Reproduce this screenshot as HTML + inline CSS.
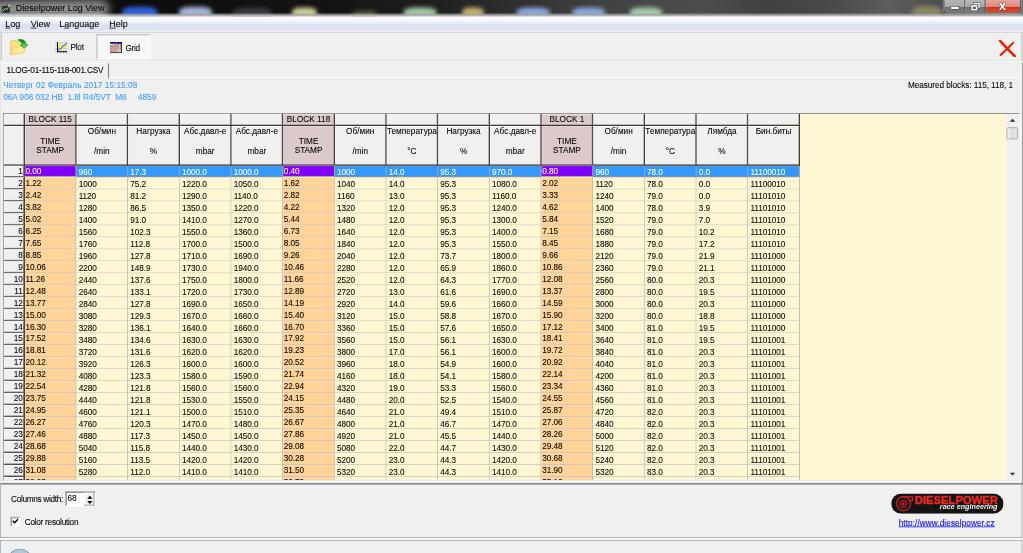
<!DOCTYPE html>
<html><head><meta charset="utf-8"><title>Dieselpower Log View</title>
<style>
html,body{margin:0;padding:0;background:#f0f0f0;overflow:hidden}
body{width:1023px;height:553px;position:relative}
#w{position:absolute;left:0;top:0;width:1366px;height:739px;transform:scale(0.74890);transform-origin:0 0;background:#f0f0f0;font-family:"Liberation Sans",sans-serif;font-size:11px;color:#000;overflow:hidden;-webkit-text-stroke:0.1px}
#w div,#w span{position:absolute;box-sizing:border-box;white-space:nowrap}
/* title */
#tb{left:0;top:0;width:1366px;height:22px;background:linear-gradient(90deg,#0a0a0a 0.0%,#0c0c0c 9.8%,#141414 33.2%,#202020 43.0%,#303030 50.8%,#404242 58.7%,#4c4e4e 68.4%,#404242 75.0%,#484a4a 81.1%,#5c5e5e 87.0%,#4c4e4e 91.9%,#6c6e6e 100.0%);overflow:hidden}
#tb .blob{border-radius:35%;filter:blur(3px)}
#tbe{left:0;top:16.5px;width:1366px;height:5.5px;background:linear-gradient(rgba(150,152,152,0),rgba(155,157,157,.7) 40%,rgba(175,177,177,.95) 72%,rgba(232,235,240,1) 100%)}
#tt{left:21px;top:4.2px;font-size:12px;color:#000}
#tglow{left:-12px;top:0px;width:158px;height:24px;border-radius:12px;background:rgba(255,255,255,.55);filter:blur(6px)}
#wb{left:1260px;top:0;width:103px;height:18px;border:1px solid #3a3a3a;border-top:none;border-radius:0 0 5px 5px;overflow:hidden;box-shadow:0 0 0 1px rgba(255,255,255,.35)}
.wbt{top:0;height:18px;background:linear-gradient(#b4b6b8 0%,#a6a8aa 48%,#6c6f74 52%,#7c7f84 100%);border-right:1px solid #444;box-shadow:inset 1px 0 0 rgba(255,255,255,.4)}
.wbt.cl{background:linear-gradient(#e8a59c 0%,#dd8a80 48%,#c9321e 52%,#d25a3c 100%);border-right:none}
#w i{position:absolute;display:block;box-sizing:border-box}
#mb{left:0;top:22px;width:1366px;height:20px;background:linear-gradient(#ffffff 0%,#f4f6fb 30%,#e6eaf5 48%,#d8dff0 56%,#dde3f2 85%,#e6eaf5 100%);font-size:12px}
#mb span{top:3px}
#mb u{text-decoration:underline}
#tool{left:1px;top:43px;width:1364px;height:38.6px;border:1px solid #a6a6a6;border-top-color:#cfcfcf;background:#f0f0f0}
/* grid */
#gridbox{left:4px;top:151px;width:1357px;height:491px;border:1px solid #585858;border-right-color:#e3e3e3;border-bottom-color:#e3e3e3;background:#f0f0f0;box-shadow:1.5px 1.5px 0 #fff}
#grid{left:0;top:0;width:1338px;height:489px;overflow:hidden;background:#fff7d3}
.gbg{left:0;top:0;width:1063px;height:489px}
.fx{background:#f0f0f0;border-left:1px solid #fff;border-top:1px solid #fff;border-right:1px solid #a0a0a0;border-bottom:1px solid #a0a0a0;text-align:center;line-height:13px}
.fx.tsb{background:#dccaca;border-color:#efe6e6 #a89898 #a89898 #efe6e6}
.fx.b0{padding-top:0px;line-height:12.2px}
.tsh{left:0;width:100%;top:12.9px;text-align:center;line-height:12.6px}
.h1{left:-4px;right:-4px;top:0px;text-align:center}
.h2{left:0;width:100%;top:26px;text-align:center}
.bl{background:#000;z-index:2}
.row{left:0;width:1063px;height:16px}
.rn{left:0;top:0;width:27px;height:15px;background:#f0f0f0;border-left:1px solid #fff;border-top:1px solid #fff;text-align:right;padding-right:0.5px;line-height:12.4px;box-shadow:0 1.3px 0 #000;border-right:1px solid #606060;border-bottom:1px solid #585858}
.c{top:0;width:69px;height:16px;border-right:1px solid #acacb4;border-bottom:1px solid #c0c0c4;background:#fff7d3;padding-left:3px;line-height:19.9px;overflow:hidden;letter-spacing:-0.1px}
.c.ts{background:#ffd39a;padding-left:1px;line-height:14.6px}
.sel .c{background:#3399ff;color:#fff}
.sel .c.ts{background:#8000ff;outline:1px dotted #8fd040;outline-offset:-1px;height:15px;z-index:4}
.foc{left:28px;top:0;width:1034px;height:15px;border-top:1px dotted #d07820;border-bottom:1px dotted #d07820;z-index:3}

#tool span{color:#000}
#gbtn{left:127px;top:2px;width:72px;height:33px;background:#f8f8f8;border:1px solid #a0a0a0;border-right-color:#fff;border-bottom-color:#fff}
#toolw{left:0;top:81px;width:1366px;height:2px;background:#fbfbfb}
#panel{left:0;top:83px;width:1366px;height:564px;border:1px solid #858585;border-top-color:#e8e8e8;border-left-color:#e0e0e0;border-bottom:2px solid #808080;}
#tab{left:1px;top:84px;width:145px;height:21px;border-left:1px solid #fff;border-top:1px solid #fff;border-right:2.4px solid #808080;border-radius:2px 2px 0 0}
#tab span{left:6.8px;top:1.8px;letter-spacing:-0.27px}
#tabline{left:146px;top:103px;width:1218px;height:1px;background:#fff}
.info{color:#3399ff;letter-spacing:0.05px;-webkit-text-stroke:0.05px}
#meas{left:1212.4px;top:108px;letter-spacing:-0.085px}
#vs{left:1338px;top:0;width:17px;height:489px;background:#f0f0f0}
#thumb{left:1px;top:18px;width:15px;height:16px;border:1px solid #979797;border-radius:2px;background:linear-gradient(90deg,#f4f4f4,#dcdcdc 50%,#e8e8e8)}
#bp{left:0;top:647px;width:1365px;height:71px;border:1px solid #a0a0a0;border-top:none}
#spin{left:86px;top:9px;width:41px;height:20px;background:#fff;border:1px solid #a0a0a0;border-right-color:#fff;border-bottom-color:#fff;box-shadow:inset 1px 1px 0 #696969}
#spb{left:24px;top:1px;width:14px;height:17px;background:#f0f0f0;border:1px solid #fff;border-right-color:#808080;border-bottom-color:#808080}
#cb{left:13px;top:43px;width:13px;height:13px;background:#fff;border:1px solid #a0a0a0;border-right-color:#fff;border-bottom-color:#fff;box-shadow:inset 1px 1px 0 #696969}
#logo{left:1188.5px;top:12.2px;width:150px;height:27px}
#lnk{left:1199px;top:45.3px;letter-spacing:0.09px;color:#0000ff;text-decoration:underline}
#sb{left:0;top:721px;width:1365px;height:18px;border:1px solid #a0a0a0;border-bottom:none}
#orb{left:8.2px;top:10.7px;width:34.4px;height:34.4px;border-radius:50%;background:linear-gradient(#b4cbdb,#8fb2cc);border:1px solid #5a88ac}
</style></head><body>
<div id="w">
<div id="tb">
 <div class="blob" style="left:163px;top:9px;width:47px;height:17px;background:#2f60e0"></div>
 <div class="blob" style="left:239px;top:9px;width:44px;height:17px;background:#a4b4d8"></div>
 <div class="blob" style="left:310px;top:10px;width:53px;height:16px;background:#36383c"></div>
 <div class="blob" style="left:390px;top:10px;width:33px;height:16px;background:#d4cc94"></div>
 <div class="blob" style="left:470px;top:14px;width:33px;height:12px;background:#5a5540"></div>
 <div class="blob" style="left:539px;top:10px;width:44px;height:16px;background:#a4c8a4"></div>
 <div class="blob" style="left:617px;top:10px;width:29px;height:16px;background:#c0b068"></div>
 <div class="blob" style="left:690px;top:10px;width:44px;height:16px;background:#8aa6dc"></div>
 <div class="blob" style="left:764px;top:10px;width:44px;height:16px;background:#8aa6dc"></div>
 <div class="blob" style="left:841px;top:10px;width:43px;height:16px;background:#a8cca8"></div>
 <div class="blob" style="left:1218px;top:8px;width:40px;height:18px;background:#8a8462"></div>
 <div id="tbe"></div>
 <div id="tglow"></div>
 <svg style="position:absolute;left:2px;top:5px" width="13" height="13" viewBox="0 0 13 13"><rect x="0.5" y="2.5" width="11" height="10" fill="#16302c" stroke="#7c8c8a" stroke-width="1"/><path d="M2 10 L5 6 L7 8 L10 4" stroke="#e8e860" stroke-width="1.200" fill="none"/><rect x="8" y="0" width="5" height="5" fill="#9aa4a4" stroke="#333" stroke-width="0.800"/></svg>
 <div id="tt">Dieselpower Log View</div>
 <div id="wb">
  <div class="wbt" style="left:0;width:28px"><i style="left:9px;top:9px;width:10px;height:3px;background:#fff;box-shadow:0 0 0 1px #555"></i></div>
  <div class="wbt" style="left:28px;width:27px"><i style="left:11px;top:4px;width:8px;height:7px;border:1.500px solid #fff;box-shadow:0 0 0 0.800px #444"></i><i style="left:8px;top:7px;width:8px;height:7px;border:2px solid #fff;background:#555;box-shadow:0 0 0 0.800px #444"></i></div>
  <div class="wbt cl" style="left:55px;width:47px"><span style="left:18px;top:-2.2px;font-size:16.500px;font-weight:bold;color:#fff;text-shadow:0 0 1px #333,0 0 1px #333,0 0 2px #333">x</span></div>
 </div>
</div>
<div id="mb"><span style="left:7px"><u>L</u>og</span><span style="left:41px"><u>V</u>iew</span><span style="left:79px">L<u>a</u>nguage</span><span style="left:146px"><u>H</u>elp</span></div>
<div id="tool">
 <svg id="ic-open" style="position:absolute;left:10.8px;top:7.8px" width="26" height="24" viewBox="0 0 26 24">
  <defs><radialGradient id="ga" cx="19" cy="9.5" r="6" gradientUnits="userSpaceOnUse"><stop offset="0" stop-color="#7ce45c"/><stop offset="0.55" stop-color="#3cb43a"/><stop offset="1" stop-color="#188818"/></radialGradient>
  <linearGradient id="gf" x1="0" y1="0" x2="0" y2="1"><stop offset="0" stop-color="#fff6b0"/><stop offset="1" stop-color="#fbe07c"/></linearGradient></defs>
  <path d="M0.8 20.6 L0.8 4 Q0.8 2.2 2.6 2 L8.7 2 L10 4.500 L16.200 4.500 L16.200 12 L3 20.600 Z" fill="#f9e084" stroke="#e6b850" stroke-width="0.900"/>
  <path d="M1.600 20.800 L4.800 11.900 L10 11.600 L11.400 9.700 L21.400 9.700 L18.900 18.800 Z" fill="url(#gf)" stroke="#ecc35c" stroke-width="0.800"/>
  <path d="M11.700 0.500 C16 -0.500 21.500 1.500 22 7.400 L24.500 7.700 L18.900 12.700 L13.900 8 L16.700 7.700 C16.500 5 14.500 2.800 11 1.900 Z" fill="url(#ga)" stroke="#1d8a1d" stroke-width="0.600"/>
 </svg>
 <svg id="ic-plot" style="position:absolute;left:70.8px;top:11.5px" width="18" height="16" viewBox="0 0 18 16">
  <rect x="3.800" y="1" width="13" height="12" fill="#e9e9e9"/>
  <path d="M3.800 1.060H17M3.800 5.050H17M3.800 9.040H17" stroke="#a8a8a8" stroke-width="0.800"/>
  <path d="M0.900 1.060H3.800M0.900 5.050H3.800M0.900 9.040H3.800M0.900 13H3.800" stroke="#7a7a7a" stroke-width="0.800"/>
  <path d="M3.800 13V14.900M8.100 13V14.900M12.100 13V14.900M16.100 13V14.900" stroke="#666" stroke-width="0.900"/>
  <path d="M4.600 8.500 L6.500 2.900 L7.800 8 L9.400 5.900 L11.500 10.100 L15.300 4.800 L16.900 6.400" fill="none" stroke="#efef40" stroke-width="1.600" stroke-linejoin="round"/>
  <path d="M4.400 10.900 L7.800 9 L8.900 8.500 L11 5.900 L16.900 1.300" fill="none" stroke="#2828b4" stroke-width="1.200"/>
  <path d="M3.800 0.500V13H16.600" fill="none" stroke="#000" stroke-width="1.300"/>
 </svg>
 <span style="left:92px;top:13px;letter-spacing:-0.3px">Plot</span>
 <div id="gbtn"></div>
 <svg id="ic-grid" style="position:absolute;left:145px;top:12px" width="16" height="15" viewBox="0 0 16 15">
  <rect x="0.300" y="0.300" width="15.400" height="14.400" fill="#fff"/>
  <path d="M3.200 2.400V14.500M5.900 2.400V14.500M8.800 2.400V14.500M11.400 2.400V14.500M14.600 2.400V14.500" stroke="#8a8a8a" stroke-width="0.800"/>
  <path d="M0 4.800H16M0 7.700H16M0 10.700H16M0 13.500H16" stroke="#8a8a8a" stroke-width="0.800"/>
  <rect x="6.75" y="2.70" width="1.300" height="1.300" fill="#e42020"/><rect x="9.45" y="2.70" width="1.300" height="1.300" fill="#e42020"/><rect x="12.95" y="2.70" width="1.300" height="1.300" fill="#e42020"/><rect x="1.25" y="5.60" width="1.300" height="1.300" fill="#e42020"/><rect x="3.85" y="5.60" width="1.300" height="1.300" fill="#e42020"/><rect x="6.75" y="5.60" width="1.300" height="1.300" fill="#e42020"/><rect x="9.45" y="5.60" width="1.300" height="1.300" fill="#e42020"/><rect x="12.95" y="5.60" width="1.300" height="1.300" fill="#e42020"/><rect x="1.25" y="8.60" width="1.300" height="1.300" fill="#e42020"/><rect x="3.85" y="8.60" width="1.300" height="1.300" fill="#e42020"/><rect x="6.75" y="8.60" width="1.300" height="1.300" fill="#e42020"/><rect x="9.45" y="8.60" width="1.300" height="1.300" fill="#e42020"/><rect x="12.95" y="8.60" width="1.300" height="1.300" fill="#e42020"/><rect x="1.25" y="11.60" width="1.300" height="1.300" fill="#e42020"/><rect x="3.85" y="11.60" width="1.300" height="1.300" fill="#e42020"/><rect x="6.75" y="11.60" width="1.300" height="1.300" fill="#e42020"/>
  <rect x="0" y="0" width="16" height="2.400" fill="#000080"/>
  <rect x="5.600" y="0.600" width="4.500" height="1.800" fill="#50506a"/>
  <path d="M15.500 2V15M0 14.500H16" stroke="#000" stroke-width="1.100" fill="none"/>
  <path d="M0.400 2V14" stroke="#666" stroke-width="0.800" fill="none"/>
 </svg>
 <span style="left:165.6px;top:14px;letter-spacing:-0.45px">Grid</span>
 <svg id="ic-x" style="position:absolute;left:1331px;top:9px" width="24" height="23" viewBox="0 0 24 23">
  <path d="M2.5 1.5 C9 9 15 15 22 22" stroke="#e62200" stroke-width="3.400" fill="none" stroke-linecap="round"/>
  <path d="M20 4 C14 10 8 16 3 20.5" stroke="#e62200" stroke-width="2.600" fill="none" stroke-linecap="round"/>
 </svg>
</div>
<div id="toolw"></div>
<div id="panel"></div>
<div id="tab"><span>1LOG-01-115-118-001.CSV</span></div>
<div id="tabline"></div>
<div class="info" style="left:4.3px;top:107px;letter-spacing:0.08px">Четверг 02 Февраль 2017 15:15:08</div>
<div class="info" style="left:4.3px;top:122.6px;letter-spacing:-0.03px">06A 906 032 HB&nbsp; 1.8l R4/5VT&nbsp; M6&nbsp;&nbsp;&nbsp;&nbsp; 4859</div>
<div id="meas">Measured blocks: 115, 118, 1</div>
<div id="gridbox"><div id="grid">
<div class="gbg"></div>
<div class="fx " style="left:0px;top:0px;width:27px;height:15px"></div>
<div class="fx " style="left:0px;top:16px;width:27px;height:52px"></div>
<div class="fx tsb b0" style="left:28px;top:0px;width:68px;height:15px">BLOCK 115</div>
<div class="fx tsb b1" style="left:28px;top:16px;width:68px;height:52px"><span class="tsh">TIME<br>STAMP</span></div>
<div class="fx  b0" style="left:97px;top:0px;width:68px;height:15px"></div>
<div class="fx  b1" style="left:97px;top:16px;width:68px;height:52px"><span class="h1">Об/мин</span><span class="h2">/min</span></div>
<div class="fx  b0" style="left:166px;top:0px;width:68px;height:15px"></div>
<div class="fx  b1" style="left:166px;top:16px;width:68px;height:52px"><span class="h1">Нагрузка</span><span class="h2">%</span></div>
<div class="fx  b0" style="left:235px;top:0px;width:68px;height:15px"></div>
<div class="fx  b1" style="left:235px;top:16px;width:68px;height:52px"><span class="h1">Абс.давл-е</span><span class="h2">mbar</span></div>
<div class="fx  b0" style="left:304px;top:0px;width:68px;height:15px"></div>
<div class="fx  b1" style="left:304px;top:16px;width:68px;height:52px"><span class="h1">Абс.давл-е</span><span class="h2">mbar</span></div>
<div class="fx tsb b0" style="left:373px;top:0px;width:68px;height:15px">BLOCK 118</div>
<div class="fx tsb b1" style="left:373px;top:16px;width:68px;height:52px"><span class="tsh">TIME<br>STAMP</span></div>
<div class="fx  b0" style="left:442px;top:0px;width:68px;height:15px"></div>
<div class="fx  b1" style="left:442px;top:16px;width:68px;height:52px"><span class="h1">Об/мин</span><span class="h2">/min</span></div>
<div class="fx  b0" style="left:511px;top:0px;width:68px;height:15px"></div>
<div class="fx  b1" style="left:511px;top:16px;width:68px;height:52px"><span class="h1">Температура</span><span class="h2">°C</span></div>
<div class="fx  b0" style="left:580px;top:0px;width:68px;height:15px"></div>
<div class="fx  b1" style="left:580px;top:16px;width:68px;height:52px"><span class="h1">Нагрузка</span><span class="h2">%</span></div>
<div class="fx  b0" style="left:649px;top:0px;width:68px;height:15px"></div>
<div class="fx  b1" style="left:649px;top:16px;width:68px;height:52px"><span class="h1">Абс.давл-е</span><span class="h2">mbar</span></div>
<div class="fx tsb b0" style="left:718px;top:0px;width:68px;height:15px">BLOCK 1</div>
<div class="fx tsb b1" style="left:718px;top:16px;width:68px;height:52px"><span class="tsh">TIME<br>STAMP</span></div>
<div class="fx  b0" style="left:787px;top:0px;width:68px;height:15px"></div>
<div class="fx  b1" style="left:787px;top:16px;width:68px;height:52px"><span class="h1">Об/мин</span><span class="h2">/min</span></div>
<div class="fx  b0" style="left:856px;top:0px;width:68px;height:15px"></div>
<div class="fx  b1" style="left:856px;top:16px;width:68px;height:52px"><span class="h1">Температура</span><span class="h2">°C</span></div>
<div class="fx  b0" style="left:925px;top:0px;width:68px;height:15px"></div>
<div class="fx  b1" style="left:925px;top:16px;width:68px;height:52px"><span class="h1">Лямбда</span><span class="h2">%</span></div>
<div class="fx  b0" style="left:994px;top:0px;width:68px;height:15px"></div>
<div class="fx  b1" style="left:994px;top:16px;width:68px;height:52px"><span class="h1">Бин.биты</span><span class="h2"></span></div>
<div class="bl" style="left:0;top:15px;width:1063px;height:1.3px"></div>
<div class="bl" style="left:0;top:68px;width:1063px;height:1.3px"></div>
<div class="bl" style="left:27px;top:0;width:1.3px;height:489px"></div>
<div class="bl" style="left:96px;top:0;width:1.3px;height:69px"></div>
<div class="bl" style="left:165px;top:0;width:1.3px;height:69px"></div>
<div class="bl" style="left:234px;top:0;width:1.3px;height:69px"></div>
<div class="bl" style="left:303px;top:0;width:1.3px;height:69px"></div>
<div class="bl" style="left:372px;top:0;width:1.3px;height:69px"></div>
<div class="bl" style="left:441px;top:0;width:1.3px;height:69px"></div>
<div class="bl" style="left:510px;top:0;width:1.3px;height:69px"></div>
<div class="bl" style="left:579px;top:0;width:1.3px;height:69px"></div>
<div class="bl" style="left:648px;top:0;width:1.3px;height:69px"></div>
<div class="bl" style="left:717px;top:0;width:1.3px;height:69px"></div>
<div class="bl" style="left:786px;top:0;width:1.3px;height:69px"></div>
<div class="bl" style="left:855px;top:0;width:1.3px;height:69px"></div>
<div class="bl" style="left:924px;top:0;width:1.3px;height:69px"></div>
<div class="bl" style="left:993px;top:0;width:1.3px;height:69px"></div>
<div class="bl" style="left:1062px;top:0;width:1.3px;height:69px"></div>
<div class="row sel" style="top:69px">
<div class="rn">1</div>
<div class="foc"></div>
<div class="c ts" style="left:28px">0.00</div>
<div class="c" style="left:97px">960</div>
<div class="c" style="left:166px">17.3</div>
<div class="c" style="left:235px">1000.0</div>
<div class="c" style="left:304px">1000.0</div>
<div class="c ts" style="left:373px">0.40</div>
<div class="c" style="left:442px">1000</div>
<div class="c" style="left:511px">14.0</div>
<div class="c" style="left:580px">95.3</div>
<div class="c" style="left:649px">970.0</div>
<div class="c ts" style="left:718px">0.80</div>
<div class="c" style="left:787px">960</div>
<div class="c" style="left:856px">78.0</div>
<div class="c" style="left:925px">0.0</div>
<div class="c" style="left:994px">11100010</div>
</div>
<div class="row" style="top:85px">
<div class="rn">2</div>
<div class="c ts" style="left:28px">1.22</div>
<div class="c" style="left:97px">1000</div>
<div class="c" style="left:166px">75.2</div>
<div class="c" style="left:235px">1220.0</div>
<div class="c" style="left:304px">1050.0</div>
<div class="c ts" style="left:373px">1.62</div>
<div class="c" style="left:442px">1040</div>
<div class="c" style="left:511px">14.0</div>
<div class="c" style="left:580px">95.3</div>
<div class="c" style="left:649px">1080.0</div>
<div class="c ts" style="left:718px">2.02</div>
<div class="c" style="left:787px">1120</div>
<div class="c" style="left:856px">78.0</div>
<div class="c" style="left:925px">0.0</div>
<div class="c" style="left:994px">11100010</div>
</div>
<div class="row" style="top:101px">
<div class="rn">3</div>
<div class="c ts" style="left:28px">2.42</div>
<div class="c" style="left:97px">1120</div>
<div class="c" style="left:166px">81.2</div>
<div class="c" style="left:235px">1290.0</div>
<div class="c" style="left:304px">1140.0</div>
<div class="c ts" style="left:373px">2.82</div>
<div class="c" style="left:442px">1160</div>
<div class="c" style="left:511px">13.0</div>
<div class="c" style="left:580px">95.3</div>
<div class="c" style="left:649px">1160.0</div>
<div class="c ts" style="left:718px">3.33</div>
<div class="c" style="left:787px">1240</div>
<div class="c" style="left:856px">79.0</div>
<div class="c" style="left:925px">0.0</div>
<div class="c" style="left:994px">11101010</div>
</div>
<div class="row" style="top:117px">
<div class="rn">4</div>
<div class="c ts" style="left:28px">3.82</div>
<div class="c" style="left:97px">1280</div>
<div class="c" style="left:166px">86.5</div>
<div class="c" style="left:235px">1350.0</div>
<div class="c" style="left:304px">1220.0</div>
<div class="c ts" style="left:373px">4.22</div>
<div class="c" style="left:442px">1320</div>
<div class="c" style="left:511px">12.0</div>
<div class="c" style="left:580px">95.3</div>
<div class="c" style="left:649px">1240.0</div>
<div class="c ts" style="left:718px">4.62</div>
<div class="c" style="left:787px">1400</div>
<div class="c" style="left:856px">78.0</div>
<div class="c" style="left:925px">3.9</div>
<div class="c" style="left:994px">11101010</div>
</div>
<div class="row" style="top:133px">
<div class="rn">5</div>
<div class="c ts" style="left:28px">5.02</div>
<div class="c" style="left:97px">1400</div>
<div class="c" style="left:166px">91.0</div>
<div class="c" style="left:235px">1410.0</div>
<div class="c" style="left:304px">1270.0</div>
<div class="c ts" style="left:373px">5.44</div>
<div class="c" style="left:442px">1480</div>
<div class="c" style="left:511px">12.0</div>
<div class="c" style="left:580px">95.3</div>
<div class="c" style="left:649px">1300.0</div>
<div class="c ts" style="left:718px">5.84</div>
<div class="c" style="left:787px">1520</div>
<div class="c" style="left:856px">79.0</div>
<div class="c" style="left:925px">7.0</div>
<div class="c" style="left:994px">11101010</div>
</div>
<div class="row" style="top:149px">
<div class="rn">6</div>
<div class="c ts" style="left:28px">6.25</div>
<div class="c" style="left:97px">1560</div>
<div class="c" style="left:166px">102.3</div>
<div class="c" style="left:235px">1550.0</div>
<div class="c" style="left:304px">1360.0</div>
<div class="c ts" style="left:373px">6.73</div>
<div class="c" style="left:442px">1640</div>
<div class="c" style="left:511px">12.0</div>
<div class="c" style="left:580px">95.3</div>
<div class="c" style="left:649px">1400.0</div>
<div class="c ts" style="left:718px">7.15</div>
<div class="c" style="left:787px">1680</div>
<div class="c" style="left:856px">79.0</div>
<div class="c" style="left:925px">10.2</div>
<div class="c" style="left:994px">11101010</div>
</div>
<div class="row" style="top:165px">
<div class="rn">7</div>
<div class="c ts" style="left:28px">7.65</div>
<div class="c" style="left:97px">1760</div>
<div class="c" style="left:166px">112.8</div>
<div class="c" style="left:235px">1700.0</div>
<div class="c" style="left:304px">1500.0</div>
<div class="c ts" style="left:373px">8.05</div>
<div class="c" style="left:442px">1840</div>
<div class="c" style="left:511px">12.0</div>
<div class="c" style="left:580px">95.3</div>
<div class="c" style="left:649px">1550.0</div>
<div class="c ts" style="left:718px">8.45</div>
<div class="c" style="left:787px">1880</div>
<div class="c" style="left:856px">79.0</div>
<div class="c" style="left:925px">17.2</div>
<div class="c" style="left:994px">11101010</div>
</div>
<div class="row" style="top:181px">
<div class="rn">8</div>
<div class="c ts" style="left:28px">8.85</div>
<div class="c" style="left:97px">1960</div>
<div class="c" style="left:166px">127.8</div>
<div class="c" style="left:235px">1710.0</div>
<div class="c" style="left:304px">1690.0</div>
<div class="c ts" style="left:373px">9.26</div>
<div class="c" style="left:442px">2040</div>
<div class="c" style="left:511px">12.0</div>
<div class="c" style="left:580px">73.7</div>
<div class="c" style="left:649px">1800.0</div>
<div class="c ts" style="left:718px">9.66</div>
<div class="c" style="left:787px">2120</div>
<div class="c" style="left:856px">79.0</div>
<div class="c" style="left:925px">21.9</div>
<div class="c" style="left:994px">11101000</div>
</div>
<div class="row" style="top:197px">
<div class="rn">9</div>
<div class="c ts" style="left:28px">10.06</div>
<div class="c" style="left:97px">2200</div>
<div class="c" style="left:166px">148.9</div>
<div class="c" style="left:235px">1730.0</div>
<div class="c" style="left:304px">1940.0</div>
<div class="c ts" style="left:373px">10.46</div>
<div class="c" style="left:442px">2280</div>
<div class="c" style="left:511px">12.0</div>
<div class="c" style="left:580px">65.9</div>
<div class="c" style="left:649px">1860.0</div>
<div class="c ts" style="left:718px">10.86</div>
<div class="c" style="left:787px">2360</div>
<div class="c" style="left:856px">79.0</div>
<div class="c" style="left:925px">21.1</div>
<div class="c" style="left:994px">11101000</div>
</div>
<div class="row" style="top:213px">
<div class="rn">10</div>
<div class="c ts" style="left:28px">11.26</div>
<div class="c" style="left:97px">2440</div>
<div class="c" style="left:166px">137.6</div>
<div class="c" style="left:235px">1750.0</div>
<div class="c" style="left:304px">1800.0</div>
<div class="c ts" style="left:373px">11.66</div>
<div class="c" style="left:442px">2520</div>
<div class="c" style="left:511px">12.0</div>
<div class="c" style="left:580px">64.3</div>
<div class="c" style="left:649px">1770.0</div>
<div class="c ts" style="left:718px">12.08</div>
<div class="c" style="left:787px">2560</div>
<div class="c" style="left:856px">80.0</div>
<div class="c" style="left:925px">20.3</div>
<div class="c" style="left:994px">11101000</div>
</div>
<div class="row" style="top:229px">
<div class="rn">11</div>
<div class="c ts" style="left:28px">12.48</div>
<div class="c" style="left:97px">2640</div>
<div class="c" style="left:166px">133.1</div>
<div class="c" style="left:235px">1720.0</div>
<div class="c" style="left:304px">1730.0</div>
<div class="c ts" style="left:373px">12.89</div>
<div class="c" style="left:442px">2720</div>
<div class="c" style="left:511px">13.0</div>
<div class="c" style="left:580px">61.6</div>
<div class="c" style="left:649px">1690.0</div>
<div class="c ts" style="left:718px">13.37</div>
<div class="c" style="left:787px">2800</div>
<div class="c" style="left:856px">80.0</div>
<div class="c" style="left:925px">19.5</div>
<div class="c" style="left:994px">11101000</div>
</div>
<div class="row" style="top:245px">
<div class="rn">12</div>
<div class="c ts" style="left:28px">13.77</div>
<div class="c" style="left:97px">2840</div>
<div class="c" style="left:166px">127.8</div>
<div class="c" style="left:235px">1690.0</div>
<div class="c" style="left:304px">1650.0</div>
<div class="c ts" style="left:373px">14.19</div>
<div class="c" style="left:442px">2920</div>
<div class="c" style="left:511px">14.0</div>
<div class="c" style="left:580px">59.6</div>
<div class="c" style="left:649px">1660.0</div>
<div class="c ts" style="left:718px">14.59</div>
<div class="c" style="left:787px">3000</div>
<div class="c" style="left:856px">80.0</div>
<div class="c" style="left:925px">20.3</div>
<div class="c" style="left:994px">11101000</div>
</div>
<div class="row" style="top:261px">
<div class="rn">13</div>
<div class="c ts" style="left:28px">15.00</div>
<div class="c" style="left:97px">3080</div>
<div class="c" style="left:166px">129.3</div>
<div class="c" style="left:235px">1670.0</div>
<div class="c" style="left:304px">1660.0</div>
<div class="c ts" style="left:373px">15.40</div>
<div class="c" style="left:442px">3120</div>
<div class="c" style="left:511px">15.0</div>
<div class="c" style="left:580px">58.8</div>
<div class="c" style="left:649px">1670.0</div>
<div class="c ts" style="left:718px">15.90</div>
<div class="c" style="left:787px">3200</div>
<div class="c" style="left:856px">80.0</div>
<div class="c" style="left:925px">18.8</div>
<div class="c" style="left:994px">11101000</div>
</div>
<div class="row" style="top:277px">
<div class="rn">14</div>
<div class="c ts" style="left:28px">16.30</div>
<div class="c" style="left:97px">3280</div>
<div class="c" style="left:166px">136.1</div>
<div class="c" style="left:235px">1640.0</div>
<div class="c" style="left:304px">1660.0</div>
<div class="c ts" style="left:373px">16.70</div>
<div class="c" style="left:442px">3360</div>
<div class="c" style="left:511px">15.0</div>
<div class="c" style="left:580px">57.6</div>
<div class="c" style="left:649px">1650.0</div>
<div class="c ts" style="left:718px">17.12</div>
<div class="c" style="left:787px">3400</div>
<div class="c" style="left:856px">81.0</div>
<div class="c" style="left:925px">19.5</div>
<div class="c" style="left:994px">11101000</div>
</div>
<div class="row" style="top:293px">
<div class="rn">15</div>
<div class="c ts" style="left:28px">17.52</div>
<div class="c" style="left:97px">3480</div>
<div class="c" style="left:166px">134.6</div>
<div class="c" style="left:235px">1630.0</div>
<div class="c" style="left:304px">1630.0</div>
<div class="c ts" style="left:373px">17.92</div>
<div class="c" style="left:442px">3560</div>
<div class="c" style="left:511px">15.0</div>
<div class="c" style="left:580px">56.1</div>
<div class="c" style="left:649px">1630.0</div>
<div class="c ts" style="left:718px">18.41</div>
<div class="c" style="left:787px">3640</div>
<div class="c" style="left:856px">81.0</div>
<div class="c" style="left:925px">19.5</div>
<div class="c" style="left:994px">11101001</div>
</div>
<div class="row" style="top:309px">
<div class="rn">16</div>
<div class="c ts" style="left:28px">18.81</div>
<div class="c" style="left:97px">3720</div>
<div class="c" style="left:166px">131.6</div>
<div class="c" style="left:235px">1620.0</div>
<div class="c" style="left:304px">1620.0</div>
<div class="c ts" style="left:373px">19.23</div>
<div class="c" style="left:442px">3800</div>
<div class="c" style="left:511px">17.0</div>
<div class="c" style="left:580px">56.1</div>
<div class="c" style="left:649px">1600.0</div>
<div class="c ts" style="left:718px">19.72</div>
<div class="c" style="left:787px">3840</div>
<div class="c" style="left:856px">81.0</div>
<div class="c" style="left:925px">20.3</div>
<div class="c" style="left:994px">11101001</div>
</div>
<div class="row" style="top:325px">
<div class="rn">17</div>
<div class="c ts" style="left:28px">20.12</div>
<div class="c" style="left:97px">3920</div>
<div class="c" style="left:166px">126.3</div>
<div class="c" style="left:235px">1600.0</div>
<div class="c" style="left:304px">1600.0</div>
<div class="c ts" style="left:373px">20.52</div>
<div class="c" style="left:442px">3960</div>
<div class="c" style="left:511px">18.0</div>
<div class="c" style="left:580px">54.9</div>
<div class="c" style="left:649px">1600.0</div>
<div class="c ts" style="left:718px">20.92</div>
<div class="c" style="left:787px">4040</div>
<div class="c" style="left:856px">81.0</div>
<div class="c" style="left:925px">20.3</div>
<div class="c" style="left:994px">11101001</div>
</div>
<div class="row" style="top:341px">
<div class="rn">18</div>
<div class="c ts" style="left:28px">21.32</div>
<div class="c" style="left:97px">4080</div>
<div class="c" style="left:166px">123.3</div>
<div class="c" style="left:235px">1580.0</div>
<div class="c" style="left:304px">1590.0</div>
<div class="c ts" style="left:373px">21.74</div>
<div class="c" style="left:442px">4160</div>
<div class="c" style="left:511px">18.0</div>
<div class="c" style="left:580px">54.1</div>
<div class="c" style="left:649px">1580.0</div>
<div class="c ts" style="left:718px">22.14</div>
<div class="c" style="left:787px">4200</div>
<div class="c" style="left:856px">81.0</div>
<div class="c" style="left:925px">20.3</div>
<div class="c" style="left:994px">11101001</div>
</div>
<div class="row" style="top:357px">
<div class="rn">19</div>
<div class="c ts" style="left:28px">22.54</div>
<div class="c" style="left:97px">4280</div>
<div class="c" style="left:166px">121.8</div>
<div class="c" style="left:235px">1560.0</div>
<div class="c" style="left:304px">1560.0</div>
<div class="c ts" style="left:373px">22.94</div>
<div class="c" style="left:442px">4320</div>
<div class="c" style="left:511px">19.0</div>
<div class="c" style="left:580px">53.3</div>
<div class="c" style="left:649px">1560.0</div>
<div class="c ts" style="left:718px">23.34</div>
<div class="c" style="left:787px">4360</div>
<div class="c" style="left:856px">81.0</div>
<div class="c" style="left:925px">20.3</div>
<div class="c" style="left:994px">11101001</div>
</div>
<div class="row" style="top:373px">
<div class="rn">20</div>
<div class="c ts" style="left:28px">23.75</div>
<div class="c" style="left:97px">4440</div>
<div class="c" style="left:166px">121.8</div>
<div class="c" style="left:235px">1530.0</div>
<div class="c" style="left:304px">1550.0</div>
<div class="c ts" style="left:373px">24.15</div>
<div class="c" style="left:442px">4480</div>
<div class="c" style="left:511px">20.0</div>
<div class="c" style="left:580px">52.5</div>
<div class="c" style="left:649px">1540.0</div>
<div class="c ts" style="left:718px">24.55</div>
<div class="c" style="left:787px">4560</div>
<div class="c" style="left:856px">81.0</div>
<div class="c" style="left:925px">20.3</div>
<div class="c" style="left:994px">11101001</div>
</div>
<div class="row" style="top:389px">
<div class="rn">21</div>
<div class="c ts" style="left:28px">24.95</div>
<div class="c" style="left:97px">4600</div>
<div class="c" style="left:166px">121.1</div>
<div class="c" style="left:235px">1500.0</div>
<div class="c" style="left:304px">1510.0</div>
<div class="c ts" style="left:373px">25.35</div>
<div class="c" style="left:442px">4640</div>
<div class="c" style="left:511px">21.0</div>
<div class="c" style="left:580px">49.4</div>
<div class="c" style="left:649px">1510.0</div>
<div class="c ts" style="left:718px">25.87</div>
<div class="c" style="left:787px">4720</div>
<div class="c" style="left:856px">82.0</div>
<div class="c" style="left:925px">20.3</div>
<div class="c" style="left:994px">11101001</div>
</div>
<div class="row" style="top:405px">
<div class="rn">22</div>
<div class="c ts" style="left:28px">26.27</div>
<div class="c" style="left:97px">4760</div>
<div class="c" style="left:166px">120.3</div>
<div class="c" style="left:235px">1470.0</div>
<div class="c" style="left:304px">1480.0</div>
<div class="c ts" style="left:373px">26.67</div>
<div class="c" style="left:442px">4800</div>
<div class="c" style="left:511px">21.0</div>
<div class="c" style="left:580px">46.7</div>
<div class="c" style="left:649px">1470.0</div>
<div class="c ts" style="left:718px">27.06</div>
<div class="c" style="left:787px">4840</div>
<div class="c" style="left:856px">82.0</div>
<div class="c" style="left:925px">20.3</div>
<div class="c" style="left:994px">11101001</div>
</div>
<div class="row" style="top:421px">
<div class="rn">23</div>
<div class="c ts" style="left:28px">27.46</div>
<div class="c" style="left:97px">4880</div>
<div class="c" style="left:166px">117.3</div>
<div class="c" style="left:235px">1450.0</div>
<div class="c" style="left:304px">1450.0</div>
<div class="c ts" style="left:373px">27.86</div>
<div class="c" style="left:442px">4920</div>
<div class="c" style="left:511px">21.0</div>
<div class="c" style="left:580px">45.5</div>
<div class="c" style="left:649px">1440.0</div>
<div class="c ts" style="left:718px">28.26</div>
<div class="c" style="left:787px">5000</div>
<div class="c" style="left:856px">82.0</div>
<div class="c" style="left:925px">20.3</div>
<div class="c" style="left:994px">11101001</div>
</div>
<div class="row" style="top:437px">
<div class="rn">24</div>
<div class="c ts" style="left:28px">28.68</div>
<div class="c" style="left:97px">5040</div>
<div class="c" style="left:166px">115.8</div>
<div class="c" style="left:235px">1440.0</div>
<div class="c" style="left:304px">1430.0</div>
<div class="c ts" style="left:373px">29.08</div>
<div class="c" style="left:442px">5080</div>
<div class="c" style="left:511px">22.0</div>
<div class="c" style="left:580px">44.7</div>
<div class="c" style="left:649px">1430.0</div>
<div class="c ts" style="left:718px">29.48</div>
<div class="c" style="left:787px">5120</div>
<div class="c" style="left:856px">82.0</div>
<div class="c" style="left:925px">20.3</div>
<div class="c" style="left:994px">11101001</div>
</div>
<div class="row" style="top:453px">
<div class="rn">25</div>
<div class="c ts" style="left:28px">29.88</div>
<div class="c" style="left:97px">5160</div>
<div class="c" style="left:166px">113.5</div>
<div class="c" style="left:235px">1420.0</div>
<div class="c" style="left:304px">1420.0</div>
<div class="c ts" style="left:373px">30.28</div>
<div class="c" style="left:442px">5200</div>
<div class="c" style="left:511px">23.0</div>
<div class="c" style="left:580px">44.3</div>
<div class="c" style="left:649px">1420.0</div>
<div class="c ts" style="left:718px">30.68</div>
<div class="c" style="left:787px">5240</div>
<div class="c" style="left:856px">82.0</div>
<div class="c" style="left:925px">20.3</div>
<div class="c" style="left:994px">11101001</div>
</div>
<div class="row" style="top:469px">
<div class="rn">26</div>
<div class="c ts" style="left:28px">31.08</div>
<div class="c" style="left:97px">5280</div>
<div class="c" style="left:166px">112.0</div>
<div class="c" style="left:235px">1410.0</div>
<div class="c" style="left:304px">1410.0</div>
<div class="c ts" style="left:373px">31.50</div>
<div class="c" style="left:442px">5320</div>
<div class="c" style="left:511px">23.0</div>
<div class="c" style="left:580px">44.3</div>
<div class="c" style="left:649px">1410.0</div>
<div class="c ts" style="left:718px">31.90</div>
<div class="c" style="left:787px">5320</div>
<div class="c" style="left:856px">83.0</div>
<div class="c" style="left:925px">20.3</div>
<div class="c" style="left:994px">11101001</div>
</div>
<div class="row" style="top:485px">
<div class="rn">27</div>
<div class="c ts" style="left:28px">32.28</div>
<div class="c" style="left:97px">5400</div>
<div class="c" style="left:166px">110.5</div>
<div class="c" style="left:235px">1400.0</div>
<div class="c" style="left:304px">1400.0</div>
<div class="c ts" style="left:373px">32.70</div>
<div class="c" style="left:442px">5440</div>
<div class="c" style="left:511px">23.0</div>
<div class="c" style="left:580px">44.3</div>
<div class="c" style="left:649px">1400.0</div>
<div class="c ts" style="left:718px">33.10</div>
<div class="c" style="left:787px">5440</div>
<div class="c" style="left:856px">83.0</div>
<div class="c" style="left:925px">20.3</div>
<div class="c" style="left:994px">11101001</div>
</div>
</div>
<div id="vs">
 <svg style="position:absolute;left:4.5px;top:6.1px" width="8" height="4.500" viewBox="0 0 9 5"><path d="M0 5 L4.5 0.5 L9 5Z" fill="#333"/></svg>
 <div id="thumb"></div>
 <svg style="position:absolute;left:4.5px;bottom:5.5px" width="8" height="4.500" viewBox="0 0 9 5"><path d="M0 0 L4.5 4.5 L9 0Z" fill="#333"/></svg>
</div>
</div>
<div id="bp">
 <span id="cwl" style="left:13.8px;top:13px;letter-spacing:-0.42px">Columns width:</span>
 <div id="spin"><span style="left:2px;top:2px">68</span>
  <div id="spb">
   <svg style="position:absolute;left:3px;top:2px" width="8" height="13" viewBox="0 0 8 13"><path d="M0.5 5 L4 1 L7.500 5Z M0.5 8 L4 12 L7.5 8Z" fill="#000"/></svg>
  </div>
 </div>
 <div id="cb"><svg style="position:absolute;left:1px;top:1px" width="9" height="9" viewBox="0 0 9 9"><path d="M1 3.5 L3.5 6 L8 1.200" stroke="#000" stroke-width="2" fill="none"/></svg></div>
 <span id="crl" style="left:32px;top:44px;letter-spacing:-0.35px">Color resolution</span>
 <div id="logo">
  <svg style="position:absolute;left:0;top:0" width="150" height="27" viewBox="0 0 150 27">
   <rect x="0" y="0" width="150" height="27" rx="13.5" fill="#141414"/>
   <circle cx="16.5" cy="13.5" r="9.3" fill="none" stroke="#d82020" stroke-width="1.6"/>
   <path d="M14 4.500 H28.500 V9.500 H25" fill="none" stroke="#d82020" stroke-width="1.6"/>
   <circle cx="16" cy="14" r="5" fill="none" stroke="#d82020" stroke-width="1.2"/>
   <circle cx="16" cy="14" r="2" fill="#d82020"/>
   <path d="M16 9V19M11 14H21M12.500 10.500L19.500 17.500M19.500 10.500L12.500 17.500" stroke="#d82020" stroke-width="0.700"/>
   <text x="31.500" y="13.800" font-family="Liberation Sans,sans-serif" font-weight="bold" font-size="14.500" fill="#e82a20" stroke="#e82a20" stroke-width="0.600" textLength="111" lengthAdjust="spacingAndGlyphs">DIESELPOWER</text>
   <text x="65" y="21" font-family="Liberation Sans,sans-serif" font-weight="bold" font-style="italic" font-size="10" fill="#f0f0f0" textLength="77" lengthAdjust="spacingAndGlyphs">race engineering</text>
  </svg>
 </div>
 <span id="lnk">http://www.dieselpower.cz</span>
</div>
<div style="left:0;top:718.6px;width:1366px;height:2.4px;background:#fcfcfc"></div>
<div id="sb"><div id="orb"></div></div>
</div>
</body></html>
